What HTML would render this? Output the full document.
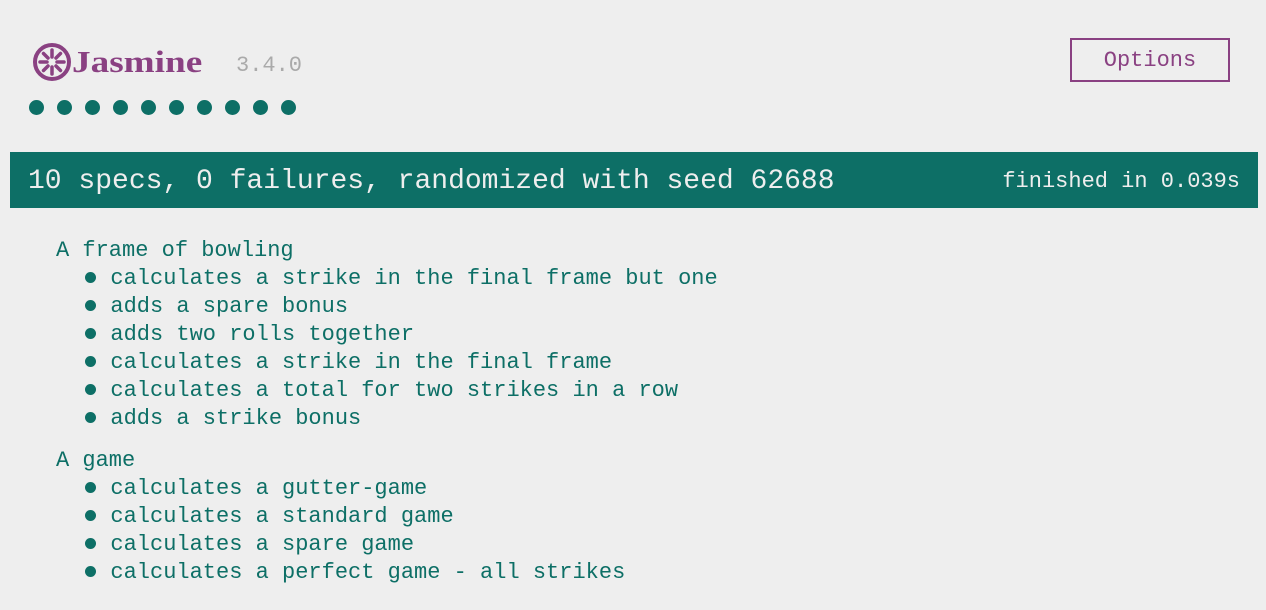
<!DOCTYPE html>
<html><head><style>
body{margin:0;background:#eee;width:1266px;height:610px;overflow:hidden;font-family:"Liberation Mono",monospace;color:#0d6f66;position:relative}
.a{position:absolute;white-space:pre;font-size:22px;line-height:28px}
.dot{position:absolute;top:100px;width:15px;height:15px;border-radius:50%;background:#0d6f66}
#bar{position:absolute;left:10px;top:152px;width:1248px;height:56px;background:#0d6f66;color:#eee}
b{display:inline-block;width:13.2px;height:28px;vertical-align:top;position:relative}
b:after{content:"";position:absolute;left:1px;top:7px;width:11px;height:11px;border-radius:50%;background:#0d6f66}
</style></head><body>
<svg style="position:absolute;left:32px;top:42px" width="40" height="40" viewBox="0 0 40 40">
<circle cx="20" cy="20" r="17" fill="none" stroke="#8a4182" stroke-width="4"/>
<g stroke="#8a4182" stroke-width="3.5" stroke-linecap="round">
<line x1="20" y1="8" x2="20" y2="15"/><line x1="20" y1="25" x2="20" y2="32"/>
<line x1="8" y1="20" x2="15" y2="20"/><line x1="25" y1="20" x2="32" y2="20"/>
<line x1="11.5" y1="11.5" x2="16" y2="16"/><line x1="24" y1="24" x2="28.5" y2="28.5"/>
<line x1="28.5" y1="11.5" x2="24" y2="16"/><line x1="16" y1="24" x2="11.5" y2="28.5"/>
</g></svg>
<div class="a" style="left:72px;top:45px;font-family:'Liberation Serif',serif;font-weight:bold;font-size:31px;line-height:34px;color:#8a4182;transform:scaleX(1.2);transform-origin:left">Jasmine</div>
<div class="a" style="left:236px;top:52px;color:#aaa">3.4.0</div>
<div class="a" style="left:1070px;top:38px;width:156px;height:40px;border:2px solid #8a4182;color:#8a4182;line-height:42px;text-align:center">Options</div>
<div class="dot" style="left:29px"></div><div class="dot" style="left:57px"></div><div class="dot" style="left:85px"></div><div class="dot" style="left:113px"></div><div class="dot" style="left:141px"></div><div class="dot" style="left:169px"></div><div class="dot" style="left:197px"></div><div class="dot" style="left:225px"></div><div class="dot" style="left:253px"></div><div class="dot" style="left:281px"></div>
<div id="bar"><div class="a" style="left:18px;top:12px;font-size:28px;line-height:36px">10 specs, 0 failures, randomized with seed 62688</div>
<div class="a" style="right:18px;top:16px">finished in 0.039s</div></div>
<div class="a" style="left:56px;top:237px">A frame of bowling</div>
<div class="a" style="left:84px;top:265px"><b></b> calculates a strike in the final frame but one
<b></b> adds a spare bonus
<b></b> adds two rolls together
<b></b> calculates a strike in the final frame
<b></b> calculates a total for two strikes in a row
<b></b> adds a strike bonus</div>
<div class="a" style="left:56px;top:447px">A game</div>
<div class="a" style="left:84px;top:475px"><b></b> calculates a gutter-game
<b></b> calculates a standard game
<b></b> calculates a spare game
<b></b> calculates a perfect game - all strikes</div>
</body></html>
